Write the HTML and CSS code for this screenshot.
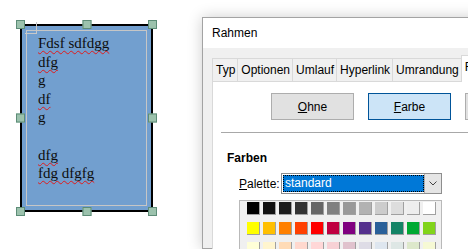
FILE: index.html
```html
<!DOCTYPE html>
<html lang="de">
<head>
    <meta charset="UTF-8">
    <title>Rahmen</title>
    <link rel="stylesheet" href="styles.css">
</head>
<body>
    <div class="desk">
        <div class="canvas">
            <div class="frame">
                <span class="handle h-tl"></span>
                <span class="handle h-tc"></span>
                <span class="handle h-tr"></span>
                <span class="handle h-ml"></span>
                <span class="handle h-mr"></span>
                <span class="handle h-bl"></span>
                <span class="handle h-bc"></span>
                <span class="handle h-br"></span>
                <span class="corner"></span>
                <div class="text-area">
                    <p><span class="typo">Fdsf sdfdgg</span></p>
                    <p><span class="typo">dfg</span></p>
                    <p>g</p>
                    <p><span class="typo">df</span></p>
                    <p>g</p>
                    <p>&nbsp;</p>
                    <p><span class="typo">dfg</span></p>
                    <p><span class="typo">fdg dfgfg</span></p>
                </div>
            </div>
        </div>

        <div class="dialog">
            <div class="titlebar">Rahmen</div>
            <div class="dialog-body">
                <div class="tabs">
                    <div class="tab">Typ</div>
                    <div class="tab">Optionen</div>
                    <div class="tab">Umlauf</div>
                    <div class="tab">Hyperlink</div>
                    <div class="tab">Umrandung</div>
                    <div class="tab active">Fläche</div>
                </div>
                <div class="panel">
                    <div class="btn-row">
                        <button class="btn"><u>O</u>hne</button>
                        <button class="btn selected"><u>F</u>arbe</button>
                        <button class="btn"><u>V</u>erlauf</button>
                    </div>
                    <div class="separator"></div>
                    <div class="section-title">Farben</div>
                    <div class="palette-row">
                        <label><u>P</u>alette:</label>
                        <div class="combo">
                            <div class="combo-field">standard</div>
                            <div class="combo-btn">
                                <svg width="8" height="5" viewBox="0 0 8 5"><path d="M0.5 0.5 L4 4 L7.5 0.5" fill="none" stroke="#444" stroke-width="1"/></svg>
                            </div>
                        </div>
                    </div>
                    <div class="swatches" id="swatches"></div>
                </div>
            </div>
        </div>
    </div>

    <script>
        let colors = [
            "#000000", "#111111", "#1c1c1c", "#333333", "#666666", "#808080", "#999999", "#b2b2b2", "#cccccc", "#dddddd", "#eeeeee", "#ffffff",
            "#ffff00", "#ffbf00", "#ff8000", "#ff4000", "#ff0000", "#bf0041", "#800080", "#55308d", "#2a6099", "#158466", "#00a933", "#81d41a",
            "#ffffd7", "#fff5ce", "#ffdbb6", "#ffd8ce", "#ffd7d7", "#f7d1d5", "#e0c2cd", "#dedce6", "#dee6ef", "#dee7e5", "#dde8cb", "#f6f9d4",
            "#ffffa6", "#ffe994", "#ffb66c", "#ffaa95", "#ffa6a6", "#ec9ba4", "#bf819e", "#b7b3ca", "#b4c7dc", "#b3cac7", "#afd095", "#e8f2a1"
        ];
        let grid = document.getElementById("swatches");
        colors.forEach(c => {
            let s = document.createElement("span");
            s.className = "swatch";
            s.style.background = c;
            grid.appendChild(s);
        });
    </script>
</body>
</html>
```

FILE: styles.css
```css
* {
    margin: 0;
    padding: 0;
    box-sizing: border-box;
}

body {
    width: 468px;
    height: 249px;
    overflow: hidden;
    background: #fff;
    font-family: 'Liberation Sans', Arial, sans-serif;
}

.desk {
    display: flex;
    height: 249px;
}

/* left: text frame on the page */
.canvas {
    flex: none;
    width: 202px;
    padding: 24px 0 0 20px;
}

.frame {
    position: relative;
    width: 133px;
    height: 188px;
    border: 2px solid #000;
    background: #729fcf;
    padding: 4px;
}

.handle {
    position: absolute;
    width: 9px;
    height: 9px;
    background: #9cc2ad;
    border: 1px solid #5d8c77;
}

.h-tl { left: -6px; top: -6px; }
.h-tc { left: 50%; top: -6px; transform: translateX(-50%); }
.h-tr { right: -6px; top: -6px; }
.h-ml { left: -6px; top: 50%; transform: translateY(-50%); }
.h-mr { right: -6px; top: 50%; transform: translateY(-50%); }
.h-bl { left: -6px; bottom: -6px; }
.h-bc { left: 50%; bottom: -6px; transform: translateX(-50%); }
.h-br { right: -6px; bottom: -6px; }

.corner {
    position: absolute;
    left: 3px;
    top: -4px;
    width: 12px;
    height: 12px;
    border-right: 1px solid #c8c8c8;
    border-bottom: 1px solid #c8c8c8;
}

.text-area {
    height: 100%;
    border: 1px solid #c6c6c6;
    padding: 3px 0 0 11px;
    font-family: 'Liberation Serif', serif;
    font-size: 15px;
    line-height: 18.6px;
    color: #0d0d0d;
}

.typo {
    text-decoration: underline wavy #e01b1b;
    text-decoration-thickness: 1px;
    text-underline-offset: 2px;
    text-decoration-skip-ink: none;
}

/* right: the dialog window */
.dialog {
    flex: none;
    width: 300px;
    margin-top: 17px;
    border: 1px solid #a3a3a3;
    box-shadow: 0 0 14px rgba(0, 0, 0, 0.2);
    background: #f0f0f0;
    font-size: 12px;
    color: #000;
}

.titlebar {
    height: 30px;
    line-height: 30px;
    padding-left: 9px;
    background: #fff;
}

.dialog-body {
    padding: 10px 0 0 9px;
    height: 220px;
}

.tabs {
    display: flex;
    align-items: flex-end;
    height: 23px;
}

.tab {
    height: 23px;
    line-height: 22px;
    padding: 0 2px 0 3px;
    border: 1px solid #d9d9d9;
    border-bottom: none;
    margin-left: -1px;
    background: #f0f0f0;
    white-space: nowrap;
}

.tab:first-child {
    margin-left: 0;
}

.tab.active {
    height: 27px;
    background: #fff;
    position: relative;
    z-index: 1;
    margin-bottom: -1px;
}

.panel {
    background: #fff;
    border: 1px solid #d9d9d9;
    height: 200px;
    padding: 11px 0 0 8px;
}

.btn-row {
    display: flex;
    gap: 14px;
    padding-left: 50px;
}

.btn {
    flex: none;
    width: 83px;
    height: 27px;
    background: #e1e1e1;
    border: 1px solid #adadad;
    font-family: 'Liberation Sans', Arial, sans-serif;
    font-size: 12px;
    color: #000;
}

.btn.selected {
    background: #cce4f7;
    border-color: #005499;
}

.separator {
    height: 1px;
    background: #a8a8a8;
    margin-top: 12px;
}

.section-title {
    font-weight: 700;
    line-height: 16px;
    margin: 17px 0 0 6px;
}

.palette-row {
    display: flex;
    align-items: center;
    margin: 7px 0 0 18px;
}

.palette-row label {
    width: 42px;
}

.combo {
    display: flex;
    width: 161px;
    height: 21px;
    border: 1px solid #8e8e8e;
    background: #fff;
}

.combo-field {
    flex: 1;
    margin: 1px 0 1px 1px;
    background: #0078d7;
    outline: 1px dotted #000;
    outline-offset: -1px;
    color: #fff;
    line-height: 17px;
    padding-left: 2px;
}

.combo-btn {
    width: 17px;
    background: #e5e5e5;
    border-left: 1px solid #adadad;
    display: flex;
    align-items: center;
    justify-content: center;
}

.swatches {
    display: grid;
    grid-template-columns: repeat(12, 13px);
    gap: 3px;
    width: 203px;
    height: 80px;
    margin: 6px 0 0 18px;
    padding: 1px 0 0 7px;
    border: 1px solid #b9b9b9;
    background: #f0f0f0;
}

.swatch {
    width: 13px;
    height: 13px;
    border-right: 1px solid #a0a0a0;
    border-bottom: 1px solid #a0a0a0;
}
```
